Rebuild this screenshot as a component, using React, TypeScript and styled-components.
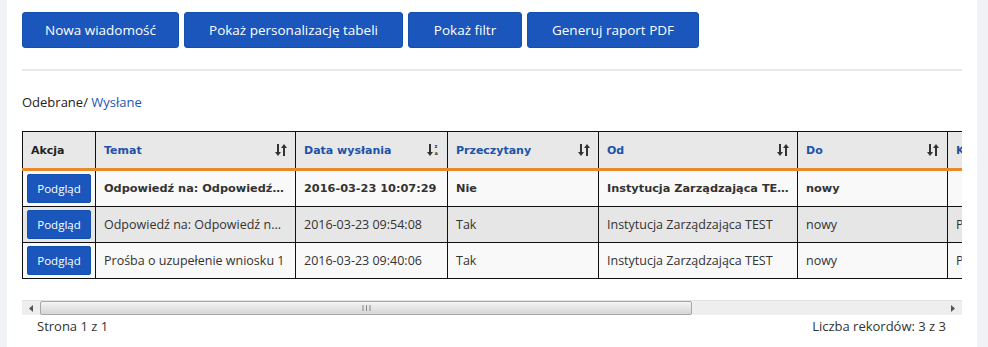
import React from "react";
import styled, { createGlobalStyle } from "styled-components";

const GlobalStyle = createGlobalStyle`
  html, body {
    margin: 0;
    padding: 0;
    background: #ffffff;
  }
  body {
    font-family: "Open Sans", "Noto Sans", sans-serif;
    color: #333333;
  }
`;

const Page = styled.div`
  display: flex;
  width: 988px;
  height: 347px;
  overflow: hidden;
`;

const SideStrip = styled.div<{ w: number }>`
  width: ${(p) => p.w}px;
  flex-shrink: 0;
  background: #f1f2f6;
`;

const Main = styled.div`
  flex: 1;
  min-width: 0;
  padding: 12px 15px 0 15px;
  background: #ffffff;
`;

const Toolbar = styled.div`
  display: flex;
  gap: 5px;
`;

const ActionButton = styled.button<{ w: number }>`
  width: ${(p) => p.w}px;
  height: 36px;
  border: 1px solid #1450b0;
  border-radius: 3px;
  background: #1a56bb;
  color: #ffffff;
  font-family: "Open Sans", sans-serif;
  font-size: 13.5px;
  padding: 0;
  cursor: pointer;
`;

const Divider = styled.hr`
  margin: 21px 0 0 0;
  border: 0;
  height: 2px;
  background: #e8e9ec;
`;

const Breadcrumb = styled.div`
  margin-top: 22px;
  font-size: 13px;
  line-height: 18px;
  color: #222;
`;

const BreadLink = styled.a`
  color: #1d55b4;
  text-decoration: none;
`;

const TableScroll = styled.div`
  margin-top: 20px;
  overflow: hidden;
`;

const Grid = styled.table`
  border-collapse: collapse;
  table-layout: fixed;
  width: 1075px;
`;

const HeadCell = styled.th<{ link?: boolean }>`
  height: 36px;
  padding: 0 8px;
  text-align: left;
  background: #e8e8e8;
  border: 1px solid #111;
  border-bottom: 3px solid #e8892b;
  font-family: "DejaVu Sans", Verdana, sans-serif;
  font-size: 11px;
  font-weight: bold;
  color: ${(p) => (p.link ? "#2052a8" : "#222")};
  white-space: nowrap;
  overflow: hidden;
`;

const HeadInner = styled.div`
  display: flex;
  align-items: center;
  justify-content: space-between;
`;

const Row = styled.tr<{ shade?: boolean }>`
  background: ${(p) => (p.shade ? "#e6e6e6" : "#f9f9f9")};
`;

const Cell = styled.td<{ strong?: boolean }>`
  height: 35px;
  padding: 0 8px;
  border: 1px solid #111;
  font-family: ${(p) =>
    p.strong ? '"DejaVu Sans", Verdana, sans-serif' : '"Open Sans", sans-serif'};
  font-size: ${(p) => (p.strong ? "11.3px" : "12.5px")};
  font-weight: ${(p) => (p.strong ? "bold" : "normal")};
  color: #333;
  white-space: nowrap;
  overflow: hidden;
  text-overflow: ellipsis;
`;

const ActionCell = styled.td`
  padding: 0 4px;
  border: 1px solid #111;
`;

const ViewButton = styled.button`
  width: 64px;
  height: 29px;
  border: 1px solid #1450b0;
  border-radius: 2px;
  background: #1a56bb;
  color: #fff;
  font-family: "Open Sans", sans-serif;
  font-size: 11.5px;
  padding: 0;
`;

const ScrollBar = styled.div`
  display: flex;
  height: 15px;
  margin-top: 21px;
  background: #eeeeee;
  border-top: 1px solid #e2e2e2;
  box-sizing: border-box;
`;

const ScrollArrow = styled.div`
  width: 18px;
  display: flex;
  align-items: center;
  justify-content: center;
  flex-shrink: 0;
`;

const Thumb = styled.div`
  width: 652px;
  box-sizing: border-box;
  border: 1px solid #a8a8a8;
  border-radius: 2px;
  background: linear-gradient(#f4f4f4, #d6d6d6);
  display: flex;
  align-items: center;
  justify-content: center;
`;

const Track = styled.div`
  flex: 1;
`;

const Footer = styled.div`
  display: flex;
  justify-content: space-between;
  padding: 2px 16px 0 15px;
  font-size: 13px;
  line-height: 18px;
  color: #333;
`;

const SortIcon = ({ alpha }: { alpha?: boolean }) =>
  alpha ? (
    <svg width="12" height="14" viewBox="0 0 12 14">
      <path d="M3 1v10" stroke="#333" strokeWidth="2" />
      <path d="M0 9l3 4 3-4z" fill="#333" />
      <text x="7.5" y="5" fontSize="5" fontFamily="DejaVu Sans" fill="#333">z</text>
      <text x="7.5" y="12" fontSize="5" fontFamily="DejaVu Sans" fill="#333">a</text>
    </svg>
  ) : (
    <svg width="12" height="14" viewBox="0 0 12 14">
      <path d="M3 1v10" stroke="#333" strokeWidth="2" />
      <path d="M0 9l3 4 3-4z" fill="#333" />
      <path d="M9 3v10" stroke="#333" strokeWidth="2" />
      <path d="M6 5l3-4 3 4z" fill="#333" />
    </svg>
  );

const columns = [
  { label: "Akcja", w: 73 },
  { label: "Temat", w: 200, link: true, sort: "both" },
  { label: "Data wysłania", w: 152, link: true, sort: "alpha" },
  { label: "Przeczytany", w: 151, link: true, sort: "both" },
  { label: "Od", w: 199, link: true, sort: "both" },
  { label: "Do", w: 150, link: true, sort: "both" },
  { label: "Kategoria", w: 150, link: true, sort: "both" },
];

const rows = [
  {
    strong: true,
    temat: "Odpowiedź na: Odpowiedź na: Prośba",
    data: "2016-03-23 10:07:29",
    read: "Nie",
    od: "Instytucja Zarządzająca TEST",
    doo: "nowy",
    kat: "",
  },
  {
    temat: "Odpowiedź na: Odpowiedź na: Prośba",
    data: "2016-03-23 09:54:08",
    read: "Tak",
    od: "Instytucja Zarządzająca TEST",
    doo: "nowy",
    kat: "Prośba",
    shade: true,
  },
  {
    temat: "Prośba o uzupełenie wniosku 1",
    data: "2016-03-23 09:40:06",
    read: "Tak",
    od: "Instytucja Zarządzająca TEST",
    doo: "nowy",
    kat: "Prośba",
  },
];

export default function App() {
  return (
    <>
      <GlobalStyle />
      <Page>
        <SideStrip w={7} />
        <Main>
          <Toolbar>
            <ActionButton w={157}>Nowa wiadomość</ActionButton>
            <ActionButton w={219}>Pokaż personalizację tabeli</ActionButton>
            <ActionButton w={114}>Pokaż filtr</ActionButton>
            <ActionButton w={172}>Generuj raport PDF</ActionButton>
          </Toolbar>
          <Divider />
          <Breadcrumb>
            Odebrane/ <BreadLink href="#">Wysłane</BreadLink>
          </Breadcrumb>
          <TableScroll>
            <Grid>
              <colgroup>
                {columns.map((c) => (
                  <col key={c.label} style={{ width: c.w }} />
                ))}
              </colgroup>
              <thead>
                <tr>
                  {columns.map((c) => (
                    <HeadCell key={c.label} link={c.link}>
                      <HeadInner>
                        <span>{c.label}</span>
                        {c.sort && <SortIcon alpha={c.sort === "alpha"} />}
                      </HeadInner>
                    </HeadCell>
                  ))}
                </tr>
              </thead>
              <tbody>
                {rows.map((r, i) => (
                  <Row key={i} shade={r.shade}>
                    <ActionCell>
                      <ViewButton>Podgląd</ViewButton>
                    </ActionCell>
                    <Cell strong={r.strong}>{r.temat}</Cell>
                    <Cell strong={r.strong}>{r.data}</Cell>
                    <Cell strong={r.strong}>{r.read}</Cell>
                    <Cell strong={r.strong}>{r.od}</Cell>
                    <Cell strong={r.strong}>{r.doo}</Cell>
                    <Cell strong={r.strong}>{r.kat}</Cell>
                  </Row>
                ))}
              </tbody>
            </Grid>
          </TableScroll>
          <ScrollBar>
            <ScrollArrow>
              <svg width="4" height="7" viewBox="0 0 4 7">
                <path d="M4 0v7L0 3.5z" fill="#555" />
              </svg>
            </ScrollArrow>
            <Thumb>
              <svg width="9" height="6" viewBox="0 0 9 6">
                <path d="M1 0v6M4.5 0v6M8 0v6" stroke="#888" strokeWidth="1" />
              </svg>
            </Thumb>
            <Track />
            <ScrollArrow>
              <svg width="4" height="7" viewBox="0 0 4 7">
                <path d="M0 0v7l4-3.5z" fill="#555" />
              </svg>
            </ScrollArrow>
          </ScrollBar>
          <Footer>
            <span>Strona 1 z 1</span>
            <span>Liczba rekordów: 3 z 3</span>
          </Footer>
        </Main>
        <SideStrip w={11} />
      </Page>
    </>
  );
}
